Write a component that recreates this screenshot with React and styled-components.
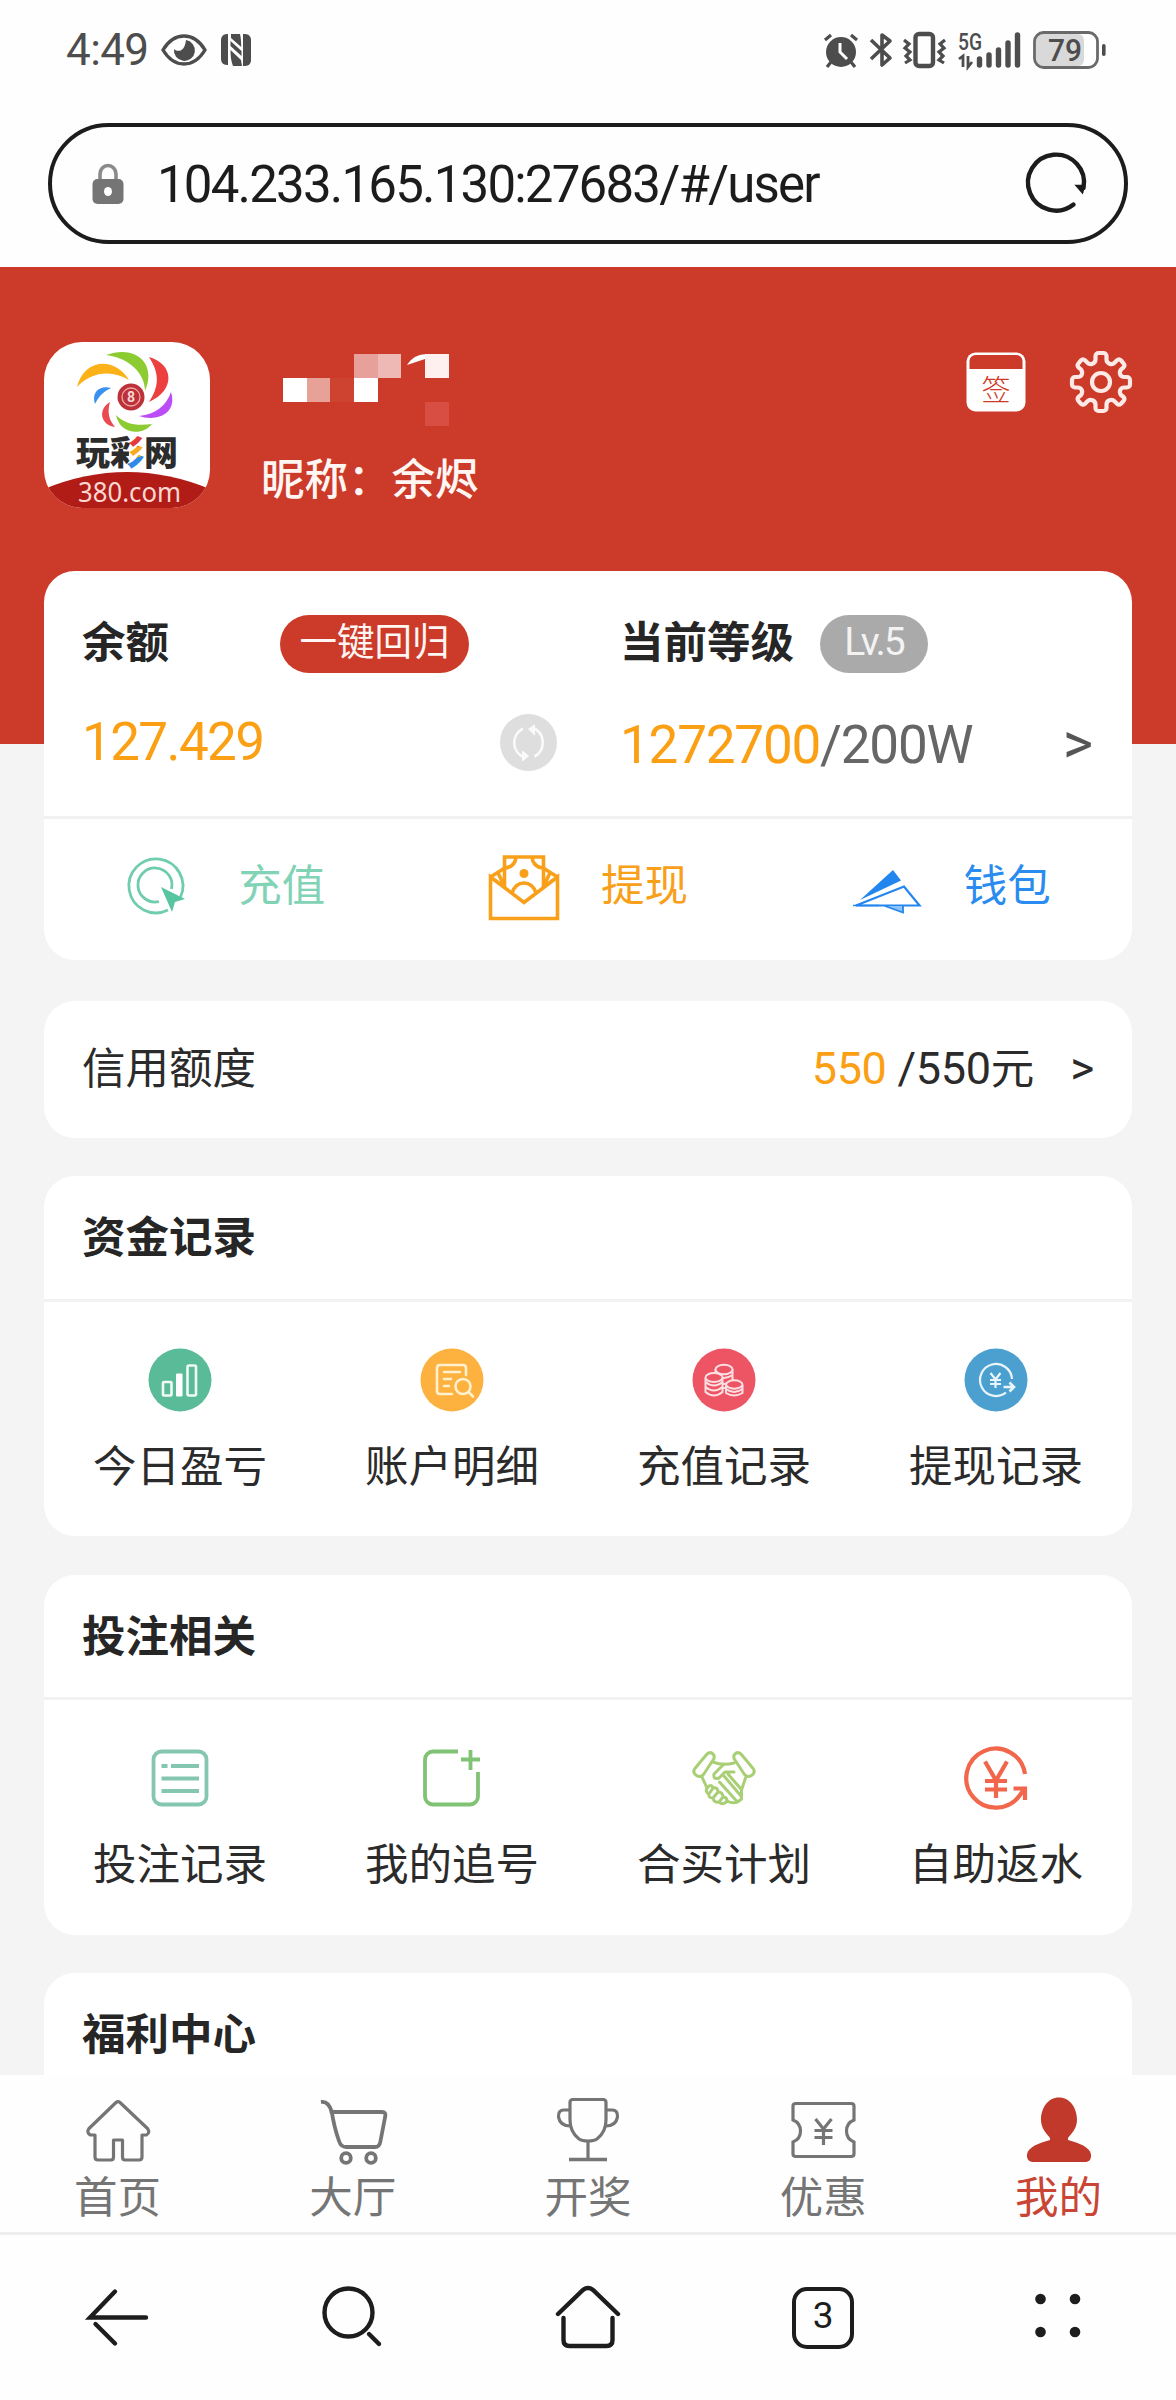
import React from "react";
import styled, { createGlobalStyle } from "styled-components";

const GlobalStyle = createGlobalStyle`
    * { box-sizing: border-box; }
    body {
        margin: 0;
        background: #fefefe;
        font-family: Roboto, "Noto Sans CJK SC", sans-serif;
        color: #2b2b2b;
    }
    svg { display: block; flex: none; overflow: visible; }
`;

/* ---------- status bar icons ---------- */

const EyeIcon = () => (
    <svg width="46" height="32" viewBox="0 0 46 32" fill="none">
        <path d="M2 16C8 6 15 2 23 2s15 4 21 14C38 26 31 30 23 30S8 26 2 16Z" stroke="#4d4d4d" strokeWidth="3.4" />
        <path d="M25 6a10.500 10.500 0 1 1-12 9c2 2 5 2.500 7.500 1 3-2 4-6 4.500-10Z" fill="#4d4d4d" />
    </svg>
);

const NfcIcon = () => (
    <svg width="32" height="34" viewBox="0 0 32 34" fill="#4d4d4d">
        <path d="M7 1h1v31H7c-4 0-6-3-6-6V7c0-3 2-6 6-6Z" />
        <path d="M25 1h-2v32h2c4 0 6-3 6-6V7c0-3-2-6-6-6Z" />
        <path d="M11 1h9c1 4 1.200 8 1.200 13L11 5V1ZM10.500 8l11 10v5l-11-10V8ZM10.500 17 21 27l1 6h-9c-2-5-2.500-10-2.500-16Z" />
    </svg>
);

const AlarmIcon = () => (
    <svg width="36" height="36" viewBox="0 0 36 36" fill="none" stroke="#4d4d4d" strokeWidth="3.200">
        <circle cx="18" cy="20" r="15" fill="#4d4d4d" stroke="none" />
        <path d="M2 8l6-5M34 8l-6-5M8 30l-4 5M28 30l4 5" />
        <path d="M17 11v9l7 7" stroke="#fff" strokeWidth="3" />
    </svg>
);

const BluetoothIcon = () => (
    <svg width="22" height="36" viewBox="0 0 22 36" fill="none" stroke="#4d4d4d" strokeWidth="3.600" strokeLinejoin="round">
        <path d="M1 8l19 18-8 7V3l8 6L1 27" />
    </svg>
);

const VibrateIcon = () => (
    <svg width="44" height="36" viewBox="0 0 44 36" fill="none" stroke="#4d4d4d">
        <rect x="12.500" y="2" width="17.500" height="32" rx="3.500" strokeWidth="4.400" />
        <path d="M1 8l5 4-4 4 5 4-4 4 4 4-5 3M42 8l-5 4 4 4-5 4 4 4-4 4 5 3" strokeWidth="3.200" />
    </svg>
);

const SignalIcon = () => (
    <svg width="64" height="36" viewBox="0 0 64 36">
        <text x="0" y="18" fontSize="24" fontWeight="500" textLength="24" lengthAdjust="spacingAndGlyphs" fill="#4d4d4d">5G</text>
        <path d="M1 27l4-3v11M10 24v11l4-5" fill="none" stroke="#4d4d4d" strokeWidth="2.800" />
        <g stroke="#4d4d4d" strokeWidth="5.400" strokeLinecap="round">
            <path d="M21.500 27v6M31 23v10M40.500 18v15M50 11v22M59.500 3v30" />
        </g>
    </svg>
);

const BatteryIcon = () => (
    <svg width="74" height="38" viewBox="0 0 74 38">
        <rect x="3" y="3" width="48" height="32" rx="6" fill="#d9d9d9" />
        <rect x="1.500" y="1.500" width="63" height="35" rx="9" fill="none" stroke="#6a6a6a" strokeWidth="2.800" />
        <rect x="69" y="13" width="3.600" height="12" rx="1.800" fill="#4d4d4d" />
        <text x="15" y="30" fontSize="32" fontWeight="500" textLength="34" lengthAdjust="spacingAndGlyphs" fill="#4d4d4d">79</text>
    </svg>
);

const LockIcon = () => (
    <svg width="32" height="42" viewBox="0 0 32 42">
        <path d="M8 18v-7a8 8.500 0 0 1 16 0v7" fill="none" stroke="#8a8a8a" strokeWidth="3.600" />
        <rect x="0.500" y="16" width="31" height="25" rx="5" fill="#757575" />
        <ellipse cx="16" cy="28.500" rx="4" ry="4.500" fill="#fff" />
    </svg>
);

const ReloadIcon = () => (
    <svg width="62" height="62" viewBox="0 0 62 62" fill="none" stroke="#1c1c1c" strokeWidth="4.400" strokeLinecap="round">
        <path d="M48.500 51.500A28 28 0 1 1 58.500 35" />
        <path d="M51 32.500h8.500L57.500 40Z" fill="#1c1c1c" strokeWidth="1.500" />
    </svg>
);

/* ---------- header icons ---------- */

const Logo = () => (
    <svg width="166" height="166" viewBox="0 0 166 166">
        <defs>
            <clipPath id="logoClip"><rect width="166" height="166" rx="38" /></clipPath>
            <linearGradient id="stroke3" x1="0" y1="0" x2="0.150" y2="1">
                <stop offset="0.380" stopColor="#e23b3b" />
                <stop offset="0.400" stopColor="#f6ac22" />
                <stop offset="0.640" stopColor="#f6ac22" />
                <stop offset="0.660" stopColor="#2e8ae6" />
            </linearGradient>
            <pattern id="caiFill" patternUnits="userSpaceOnUse" x="66" y="92" width="36" height="40">
                <rect width="36" height="40" fill="#2c2c2c" />
                <path d="M20 0h16v40H18Z" fill="url(#stroke3)" />
            </pattern>
        </defs>
        <g clipPath="url(#logoClip)">
            <rect width="166" height="166" fill="#fff" />
            <path d="M33 45C40 17 70 14 85 38C68 27 46 30 33 45Z" fill="#fbb117" />
            <path d="M62 13C92 2 113 22 101 49C101 32 86 16 62 13Z" fill="#8dcb33" />
            <path d="M105 15C130 22 132 48 105 60C115 45 116 32 105 15Z" fill="#ec4040" />
            <path d="M127 50C134 72 112 80 95 74C112 72 122 64 127 50Z" fill="#bb4cf7" />
            <path d="M72 73C82 83 94 84 108 82C99 94 76 93 72 73Z" fill="#8dcb33" />
            <path d="M66 60C63 70 65 78 71 85C57 83 53 68 66 60Z" fill="#ea4a52" />
            <path d="M67 46C59 50 55 54 51 62C47 50 56 43 67 46Z" fill="#3b92ee" />
            <circle cx="87" cy="55" r="13.500" fill="#bd3239" />
            <circle cx="87" cy="55" r="9" fill="none" stroke="#eda8a8" strokeWidth="1.300" />
            <path d="M0 147Q83 113 166 147V166H0Z" fill="#b21c17" />
        </g>
        <text x="87" y="60" textAnchor="middle" fontSize="14" fontWeight="700" fill="#f7d6d6">8</text>
        <text x="32" y="123" fontSize="34" fontWeight="900" fill="#2c2c2c">玩</text>
        <text x="66" y="123" fontSize="34" fontWeight="900" fill="url(#caiFill)">彩</text>
        <text x="100" y="123" fontSize="34" fontWeight="900" fill="#2c2c2c">网</text>
        <text x="34" y="160" fontFamily="Noto Sans" fontSize="28" textLength="103" lengthAdjust="spacingAndGlyphs" fill="#fbd9d3">380.com</text>
    </svg>
);

const MaskedName = () => (
    <svg width="170" height="72" viewBox="0 0 170 72" shapeRendering="crispEdges">
        <rect x="0" y="24" width="24" height="24" fill="#fff" />
        <rect x="24" y="24" width="23" height="24" fill="#e8a197" />
        <rect x="47" y="24" width="24" height="24" fill="#cd4330" />
        <rect x="71" y="24" width="24" height="24" fill="#fff" />
        <rect x="71" y="0" width="24" height="24" fill="#e7a09a" />
        <rect x="95" y="0" width="23" height="24" fill="#eeb8b4" />
        <path d="M124 11C130 1 142-3 153 3L142 5L124 11Z" fill="#fff" shapeRendering="auto" />
        <rect x="142" y="0" width="24" height="24" fill="#fdf0ee" />
        <rect x="142" y="48" width="24" height="24" fill="#d84e42" />
    </svg>
);

const SignIcon = () => (
    <svg width="60" height="60" viewBox="0 0 60 60">
        <rect x="0.500" y="0.500" width="59" height="59" rx="9" fill="#fff" />
        <path d="M3.500 17V9a6 6 0 0 1 6-6h41a6 6 0 0 1 6 6v8Z" fill="#cc3a29" />
        <text x="30" y="49" textAnchor="middle" fontSize="29" fontWeight="300" fill="#cc3a29">签</text>
    </svg>
);

const GearIcon = () => (
    <svg width="62" height="62" viewBox="0 0 62 62" fill="none" stroke="#fdeae6" strokeWidth="4.200" strokeLinejoin="round">
        <path d="M25.500 8.500V5a3 3 0 0 1 3-3h5a3 3 0 0 1 3 3v3.500q0 3 3 4.200t5-.9L47 9.300a3 3 0 0 1 4 0l2.500 3a3 3 0 0 1 0 4L51 18.500q-1.800 2.500-.8 5t4.300 2.500H57a3 3 0 0 1 3 3v4.500a3 3 0 0 1-3 3h-2.500q-3.300 0-4.300 2.500t.8 5l2.500 2a3 3 0 0 1 0 4L51 52.700a3 3 0 0 1-4 0l-2.500-2.500q-2-2-5-.9t-3 4.200V57a3 3 0 0 1-3 3h-5a3 3 0 0 1-3-3v-3.500q0-3-3-4.200t-5 .9L15 52.700a3 3 0 0 1-4 0L8.500 50a3 3 0 0 1 0-4l2.500-2q1.800-2.500.8-5T7.500 36.500H5a3 3 0 0 1-3-3V29a3 3 0 0 1 3-3h2.500q3.300 0 4.300-2.500t-.8-5l-2.500-2.200a3 3 0 0 1 0-4L11 9.300a3 3 0 0 1 4 0l2.500 2.500q2 2 5 .9t3-4.200Z" />
        <circle cx="31" cy="31" r="9" />
    </svg>
);

/* ---------- balance card icons ---------- */

const RefreshIcon = () => (
    <svg width="57" height="57" viewBox="0 0 57 57" fill="none" stroke="#fafafa" strokeWidth="2.600">
        <circle cx="28.500" cy="28.500" r="28.500" fill="#dedede" stroke="none" />
        <path d="M23 14.500A16 16 0 0 0 24 43.500M33.500 14A16 16 0 0 1 34.500 42.500" />
        <path d="M35 11l-6 4 6 6M22 37l6 5-6 5" fill="#fafafa" strokeWidth="1.400" />
    </svg>
);

const RechargeIcon = () => (
    <svg width="72" height="66" viewBox="0 0 72 66" fill="none" stroke="#6fccac" strokeWidth="2.800">
        <path d="M43 55A27 27 0 1 1 55.500 42" />
        <path d="M34 46.500A17 17 0 1 1 46.500 34" />
        <path d="M36 32l24 12-10 3-3 10Z" fill="#58c5a1" stroke="none" />
    </svg>
);

const WithdrawIcon = () => (
    <svg width="72" height="66" viewBox="0 0 72 66" fill="none" stroke="#f9a01b" strokeWidth="3.600">
        <path d="M2.500 22v41.500h67V22L36 47.500ZM2.500 22 16 13.500M69.500 22 56 13.500M2.500 22l14 10M69.500 22l-14 10M10 18l6.500 13M62 18l-6.500 13" />
        <path d="M16.500 32V2h39v30M28 2q-1 10-11 11M44 2q1 10 11 11" />
        <path d="M24 38c2-6 6-10 12-10s10 4 12 10" />
        <circle cx="36" cy="18.500" r="4.500" fill="#f9a01b" stroke="none" />
    </svg>
);

const WalletIcon = () => (
    <svg width="72" height="66" viewBox="0 0 72 66">
        <path d="M9 45 42 15l8 10.500Z" fill="#2386ef" />
        <path d="M5 50.500 53 31.500l15.500 19Z" fill="none" stroke="#2386ef" strokeWidth="2.200" />
        <path d="M34 51l18 6.500V51" fill="#8fc2f8" stroke="#2386ef" strokeWidth="1.800" />
        <path d="M2 50.500h26" stroke="#2386ef" strokeWidth="1.500" />
    </svg>
);

/* ---------- record icons ---------- */

const TodayIcon = () => (
    <svg width="64" height="64" viewBox="0 0 64 64" fill="none" stroke="#f1faf6" strokeWidth="2.600">
        <circle cx="32" cy="32" r="31.500" fill="#5abb99" stroke="none" />
        <rect x="15" y="34" width="8.500" height="13.500" rx="1" />
        <rect x="28" y="25.500" width="6.500" height="23" rx="1" fill="#fff" stroke="none" />
        <rect x="39.500" y="17.500" width="8.500" height="30" rx="1.500" />
    </svg>
);

const DetailIcon = () => (
    <svg width="64" height="64" viewBox="0 0 64 64" fill="none" stroke="#fff0cf" strokeWidth="2.600" strokeLinecap="round">
        <circle cx="32" cy="32" r="31.500" fill="#fdb23f" stroke="none" />
        <path d="M46 27v-7q0-3-3-3H20q-3 0-3 3v23q0 3 3 3h12M24 24h16M24 31h7M24 38h5" />
        <circle cx="43" cy="38.500" r="7.500" />
        <path d="M48.500 44l4.500 4.500" />
    </svg>
);

const CoinsIcon = () => (
    <svg width="64" height="64" viewBox="0 0 64 64" fill="#ee5564" stroke="#fbe0e3" strokeWidth="2">
        <circle cx="32" cy="32" r="31.500" stroke="none" />
        <path d="M23.500 21v19h17V21" />
        <path d="M23.500 27q8.500 6 17 0M23.500 33q8.500 6 17 0" />
        <ellipse cx="32" cy="21.500" rx="8.500" ry="4.700" />
        <path d="M13.500 30v14q8.500 7 17 0V30" />
        <path d="M13.500 34q8.500 7 17 0M13.500 39q8.500 7 17 0" />
        <ellipse cx="22" cy="29.500" rx="8.500" ry="4.500" />
        <path d="M34 37v8q8 5 16.500 0v-8" />
        <path d="M34 41q8 6 16.500 0" />
        <ellipse cx="42.300" cy="36.500" rx="8.200" ry="4.200" />
    </svg>
);

const CashOutIcon = () => (
    <svg width="64" height="64" viewBox="0 0 64 64" fill="none" stroke="#eaf5fb" strokeWidth="2.200">
        <circle cx="32" cy="32" r="31.500" fill="#4ba0d0" stroke="none" />
        <path d="M42 44.500A16 16 0 1 1 48 31" />
        <path d="M39.500 39H50M45.500 34.500 50 39l-4.500 4.500" strokeWidth="2.600" />
        <path d="M26.500 25l5 6.500 5-6.500M31.500 31v9M26 32h11M26 36h11" />
    </svg>
);

const BetListIcon = () => (
    <svg width="64" height="64" viewBox="0 0 64 64" fill="none" stroke="#85c6b1" strokeWidth="3.800">
        <rect x="5.500" y="5.500" width="53" height="53" rx="8" />
        <path d="M13.500 20h6M23 20h28M13.500 32.500h37.500M13.500 45h37.500" />
    </svg>
);

const ChaseIcon = () => (
    <svg width="64" height="64" viewBox="0 0 64 64" fill="none" stroke="#80c375" strokeWidth="3.800">
        <path d="M38 5.500H13a8 8 0 0 0-8 8v37a8 8 0 0 0 8 8h37a8 8 0 0 0 8-8V26" />
        <path d="M41 13.500h19M50.500 4v20" />
    </svg>
);

const HandshakeIcon = () => (
    <svg width="64" height="64" viewBox="0 0 64 64" fill="none" stroke="#a9cf75" strokeWidth="3" strokeLinecap="round" strokeLinejoin="round">
        <path d="M15 8 2.500 23q-2 4 2 6.500t7-1L22 12.500q1-3-1.500-5T15 8Z" />
        <path d="M49 8l12.500 15q2 4-2 6.500t-7-1L42 12.500q-1-3 1.500-5T49 8Z" />
        <path d="M21 16q10 4 21 1M10 31l5 11M53.500 32l-4 12v9l-4 3-18-20" />
        <path d="M32 18l-10 10q-1 6 5 4l6-6h9M32 30l17 20M36 28l13 15" />
        <path d="M15 42q4-5 6 0q5-1 5 4q5 0 5 5q4 0 4 4q-4 5-8 1q-5 1-6-4q-5 0-4-4q-4-2-2-6ZM21 42l-4 6M26 46l-5 6M31 51l-4 5M35 55q6 3 10 1" />
    </svg>
);

const RebateIcon = () => (
    <svg width="64" height="64" viewBox="0 0 64 64" fill="none" stroke="#f2674c" strokeWidth="4.200">
        <path d="M61 28A29.500 29.500 0 1 0 56 49L61 42" />
        <path d="M49.500 42.500H61V54" />
        <path d="M21 15.500l11 19 11-19M32 34v18M21 35h22M21 43.500h22" />
    </svg>
);

/* ---------- tab bar icons ---------- */

const HomeTabIcon = () => (
    <svg width="66" height="66" viewBox="0 0 66 66" fill="none" stroke="#757575" strokeWidth="3.200" strokeLinejoin="round">
        <path d="M31 5.500q2-1.800 4 0L62.500 31.500q3 4-1 6.500H57v22q0 3-3 3H40q-2.500 0-2.500-3V43h-9v17q0 3-2.500 3H13q-3 0-3-3V38H5.500Q1 35.500 4 31.500Z" />
    </svg>
);

const CartTabIcon = () => (
    <svg width="66" height="66" viewBox="0 0 66 66" fill="none" stroke="#757575" strokeWidth="3.800">
        <path d="M1 5q8-1 10.500 10H62q4 0 3.300 4l-5 26q-1 5-5 5H26q-5 0-7-6Q14 30 11.500 13" />
        <circle cx="26" cy="61" r="4.800" />
        <circle cx="51" cy="61" r="4.800" />
    </svg>
);

const CupTabIcon = () => (
    <svg width="66" height="66" viewBox="0 0 66 66" fill="none" stroke="#757575" strokeWidth="3.200">
        <path d="M15 5.500q0-3 3-3h30q3 0 3 3V23q0 12-9 19-3 2-9 2t-9-2Q15 35 15 23Z" />
        <path d="M15 13H9q-6 0-5.500 7Q5 29 15.500 29M51 13h6q6 0 5.500 7Q61 29 50.500 29M33 44v18.500" />
        <path d="M14 62.500h38" strokeWidth="3.600" />
    </svg>
);

const TicketTabIcon = () => (
    <svg width="66" height="66" viewBox="0 0 66 66" fill="none" stroke="#757575" strokeWidth="3.200">
        <path d="M6 6.500h55q3 0 3 2.500v14c-10 4-10 18 0 22v12q0 2.500-3 2.500H6q-3 0-3-2.500V45c10-4 10-18 0-22V9q0-2.500 3-2.500Z" />
        <path d="M25.500 22l8 10 8-10M33.500 32v16M24.500 33.500h18M24.500 40.500h18" />
    </svg>
);

const UserTabIcon = () => (
    <svg width="66" height="66" viewBox="0 0 66 66" fill="#c1392b">
        <path d="M34 0.500C45 0.500 52 11 52 23c0 8-5 13-9 18v2c11 3 22 7 23 14.500 .5 5-2 7.500-6 7.500H8c-4 0-6.500-3-6-7.500C3 50 14 46 25 43v-2c-4-5-9-10-9-18C16 11 23 .5 34 .5Z" />
    </svg>
);

/* ---------- browser toolbar icons ---------- */

const BackIcon = () => (
    <svg width="64" height="64" viewBox="0 0 64 64" fill="none" stroke="#1d1d1d" strokeWidth="4.400" strokeLinecap="round">
        <path d="M60 31.500H4L29 5.500M9.500 38 29 57.500" />
    </svg>
);

const SearchIcon = () => (
    <svg width="64" height="64" viewBox="0 0 64 64" fill="none" stroke="#1d1d1d" strokeWidth="4.400" strokeLinecap="round">
        <circle cx="27.500" cy="26.500" r="24" />
        <path d="M48 48l10 10" />
    </svg>
);

const HouseIcon = () => (
    <svg width="66" height="64" viewBox="0 0 66 64" fill="none" stroke="#1d1d1d" strokeWidth="4.400" strokeLinecap="round">
        <path d="M3 28 28 4q5-4 10 0l25 24" />
        <path d="M8.500 32v22q0 6 6 6h37q6 0 6-6V32" />
    </svg>
);

const DotsIcon = () => (
    <svg width="64" height="64" viewBox="0 0 64 64" fill="#1d1d1d">
        <circle cx="14.500" cy="13" r="5.300" />
        <circle cx="49" cy="13" r="5.300" />
        <circle cx="14.500" cy="46" r="5.300" />
        <circle cx="49" cy="46" r="5.300" />
    </svg>
);

const actions = [
    { label: "充值", color: "#82d3b6", Icon: RechargeIcon },
    { label: "提现", color: "#f9a01b", Icon: WithdrawIcon },
    { label: "钱包", color: "#2a8cf0", Icon: WalletIcon },
];

const sections = [
    {
        title: "资金记录",
        items: [
            { label: "今日盈亏", Icon: TodayIcon },
            { label: "账户明细", Icon: DetailIcon },
            { label: "充值记录", Icon: CoinsIcon },
            { label: "提现记录", Icon: CashOutIcon },
        ],
    },
    {
        title: "投注相关",
        items: [
            { label: "投注记录", Icon: BetListIcon },
            { label: "我的追号", Icon: ChaseIcon },
            { label: "合买计划", Icon: HandshakeIcon },
            { label: "自助返水", Icon: RebateIcon },
        ],
    },
    { title: "福利中心", items: [] },
];

const tabs = [
    { label: "首页", Icon: HomeTabIcon },
    { label: "大厅", Icon: CartTabIcon },
    { label: "开奖", Icon: CupTabIcon },
    { label: "优惠", Icon: TicketTabIcon },
    { label: "我的", Icon: UserTabIcon, active: true },
];

export default function App() {
    return (
        <>
            <GlobalStyle />
            <Phone>
                <StatusBar>
                    <StatusGroup $gap="13px">
                        <Clock>4:49</Clock>
                        <EyeIcon />
                        <NfcIcon />
                    </StatusGroup>
                    <StatusGroup $gap="11px">
                        <AlarmIcon />
                        <BluetoothIcon />
                        <VibrateIcon />
                        <SignalIcon />
                        <BatteryIcon />
                    </StatusGroup>
                </StatusBar>
                <AddressBar>
                    <LockIcon />
                    <Address>104.233.165.130:27683/#/user</Address>
                    <ReloadIcon />
                </AddressBar>

                <Page>
                    <Hero>
                        <Logo />
                        <Profile>
                            <MaskedName />
                            <Nickname>昵称：余烬</Nickname>
                        </Profile>
                        <HeroActions>
                            <SignIcon />
                            <GearIcon />
                        </HeroActions>
                    </Hero>

                    <Cards>
                        <Card>
                            <Balance>
                                <BalanceColumn>
                                    <BalanceTop>
                                        <Label>余额</Label>
                                        <ReturnButton>一键回归</ReturnButton>
                                    </BalanceTop>
                                    <BalanceBottom>
                                        <Amount>127.429</Amount>
                                        <RefreshIcon />
                                    </BalanceBottom>
                                </BalanceColumn>
                                <LevelColumn>
                                    <LevelTop>
                                        <Label>当前等级</Label>
                                        <LevelBadge>Lv.5</LevelBadge>
                                    </LevelTop>
                                    <BalanceBottom>
                                        <Progress><Orange>1272700</Orange>/200W</Progress>
                                        <Arrow>&gt;</Arrow>
                                    </BalanceBottom>
                                </LevelColumn>
                            </Balance>
                            <ActionRow>
                                {actions.map(({ label, color, Icon }) => (
                                    <Action key={label} $color={color}>
                                        <Icon />
                                        <ActionLabel>{label}</ActionLabel>
                                    </Action>
                                ))}
                            </ActionRow>
                        </Card>

                        <CreditCard>
                            <span>信用额度</span>
                            <CreditValue>
                                <Orange>550</Orange> /550<Unit>元</Unit>
                                <CreditArrow>&gt;</CreditArrow>
                            </CreditValue>
                        </CreditCard>

                        {sections.map(({ title, items }) => (
                            <Section key={title}>
                                <SectionTitle>{title}</SectionTitle>
                                <SectionGrid>
                                    {items.map(({ label, Icon }) => (
                                        <SectionItem key={label}>
                                            <Icon />
                                            {label}
                                        </SectionItem>
                                    ))}
                                </SectionGrid>
                            </Section>
                        ))}
                    </Cards>
                </Page>

                <TabBar>
                    {tabs.map(({ label, Icon, active }) => (
                        <Tab key={label} $active={active}>
                            <Icon />
                            {label}
                        </Tab>
                    ))}
                </TabBar>
                <BrowserBar>
                    <BackIcon />
                    <SearchIcon />
                    <HouseIcon />
                    <TabCount>3</TabCount>
                    <DotsIcon />
                </BrowserBar>
            </Phone>
        </>
    );
}

const Phone = styled.div`
    display: flex;
    flex-direction: column;
    width: 1176px;
    height: 2400px;
    overflow: hidden;
    background: #fefefe;
`;

const StatusBar = styled.header`
    display: flex;
    align-items: center;
    justify-content: space-between;
    height: 100px;
    padding: 0 69px 0 66px;
`;

const StatusGroup = styled.div`
    display: flex;
    align-items: center;
    gap: ${({ $gap }) => $gap};
`;

const Clock = styled.span`
    font-size: 44px;
    line-height: 50px;
    letter-spacing: -0.600px;
    color: #4d4d4d;
`;

const AddressBar = styled.div`
    display: flex;
    align-items: center;
    flex: none;
    height: 121px;
    margin: 23px 48px;
    padding: 0 37px 0 40px;
    border: 4.500px solid #1c1c1c;
    border-radius: 61px;
`;

const Address = styled.span`
    flex: 1;
    padding: 2px 0 0 33px;
    font-size: 51px;
    line-height: 60px;
    letter-spacing: -1.800px;
    color: #1c1c1c;
`;

const Page = styled.main`
    flex: none;
    height: 1808px;
    overflow: hidden;
    background: #f4f4f4;
`;

const Hero = styled.section`
    display: flex;
    align-items: flex-start;
    height: 477px;
    padding: 75px 44px 0;
    background: #cc3a29;
`;

const Profile = styled.div`
    display: flex;
    flex-direction: column;
    flex: 1;
    gap: 27px;
    padding: 12px 0 0 51px;

    svg {
        margin-left: 22px;
    }
`;

const Nickname = styled.span`
    font-size: 43.500px;
    font-weight: 500;
    line-height: 56px;
    color: #fff5f2;
`;

const HeroActions = styled.div`
    display: flex;
    align-items: center;
    gap: 44px;
    padding-top: 9px;
`;

const Cards = styled.div`
    position: relative;
    display: flex;
    flex-direction: column;
    gap: 38.500px;
    margin: -173px 44px 0;
`;

const Card = styled.section`
    background: #fff;
    border-radius: 31px;
`;

const Balance = styled.div`
    display: flex;
    height: 248px;
    border-bottom: 3px solid #f1f1f1;
`;

const BalanceColumn = styled.div`
    width: 539px;
    padding: 43px 26px 0 38px;
`;

const LevelColumn = styled.div`
    flex: 1;
    padding: 43px 39px 0 37px;
`;

const BalanceTop = styled.div`
    display: flex;
    align-items: center;
    gap: 111px;
    height: 59px;
`;

const LevelTop = styled(BalanceTop)`
    gap: 26px;
`;

const Label = styled.span`
    font-size: 43.500px;
    font-weight: 700;
    line-height: 56px;
    color: #262626;
`;

const ReturnButton = styled.button`
    width: 189px;
    height: 58px;
    padding: 0 0 4px;
    border: 0;
    border-radius: 29px;
    background: #cc3a29;
    font-family: inherit;
    font-size: 37.500px;
    line-height: 54px;
    color: #fff5f2;
`;

const LevelBadge = styled.span`
    width: 108px;
    height: 58px;
    border-radius: 29px;
    background: #aaa;
    font-size: 39px;
    letter-spacing: -2px;
    line-height: 54px;
    text-align: center;
    color: #f3f3f3;
`;

const BalanceBottom = styled.div`
    display: flex;
    align-items: center;
    justify-content: space-between;
    height: 58px;
    margin-top: 40px;
`;

const Amount = styled.span`
    font-size: 53px;
    line-height: 58px;
    letter-spacing: -1.600px;
    color: #fba014;
`;

const Progress = styled(Amount)`
    padding-top: 6px;
    letter-spacing: -1.200px;
    color: #666;
`;

const Orange = styled.span`
    color: #fba014;
`;

const Arrow = styled.span`
    padding-top: 2px;
    font-size: 58px;
    line-height: 58px;
    color: #555;
`;

const ActionRow = styled.div`
    display: grid;
    grid-template-columns: repeat(3, 1fr);
    height: 141px;
`;

const Action = styled.div`
    display: flex;
    align-items: center;
    justify-content: center;
    gap: 41px;
    height: 138px;
    color: ${({ $color }) => $color};
`;

const ActionLabel = styled.span`
    padding-bottom: 3px;
    font-size: 43.500px;
    line-height: 56px;
`;

const CreditCard = styled(Card)`
    display: flex;
    align-items: center;
    justify-content: space-between;
    height: 137px;
    margin-top: 2px;
    padding: 0 38px 8px;
    font-size: 43.500px;
`;

const CreditValue = styled.span`
    font-size: 45px;
    letter-spacing: -0.300px;
`;

const Unit = styled.span`
    font-size: 43.500px;
    letter-spacing: 0;
`;

const CreditArrow = styled.span`
    margin-left: 36px;
    font-size: 46px;
`;

const Section = styled(Card)`
    height: 360px;
    flex: none;
`;

const SectionTitle = styled.h2`
    height: 125.500px;
    margin: 0;
    padding-left: 38px;
    border-bottom: 3.500px solid #f2f2f2;
    font-size: 43.500px;
    font-weight: 700;
    line-height: 125px;
    color: #262626;
`;

const SectionGrid = styled.div`
    display: grid;
    grid-template-columns: repeat(4, 1fr);
    padding-top: 46px;
`;

const SectionItem = styled.div`
    display: flex;
    flex-direction: column;
    align-items: center;
    gap: 28px;
    font-size: 43.500px;
    line-height: 56px;
`;

const TabBar = styled.nav`
    display: grid;
    grid-template-columns: repeat(5, 1fr);
    height: 160px;
    flex: none;
    padding-top: 22px;
    border-bottom: 3px solid #eee;
    background: #fefefe;
`;

const Tab = styled.div`
    display: flex;
    flex-direction: column;
    align-items: center;
    gap: 8px;
    font-size: 43.500px;
    line-height: 56px;
    color: ${({ $active }) => ($active ? "#c94535" : "#757575")};
`;

const BrowserBar = styled.footer`
    display: grid;
    grid-template-columns: repeat(5, 1fr);
    justify-items: center;
    align-items: center;
    height: 165px;
`;

const TabCount = styled.span`
    width: 62px;
    height: 62px;
    border: 4.500px solid #1d1d1d;
    border-radius: 15px;
    font-size: 37px;
    line-height: 50px;
    text-align: center;
    color: #1d1d1d;
`;
